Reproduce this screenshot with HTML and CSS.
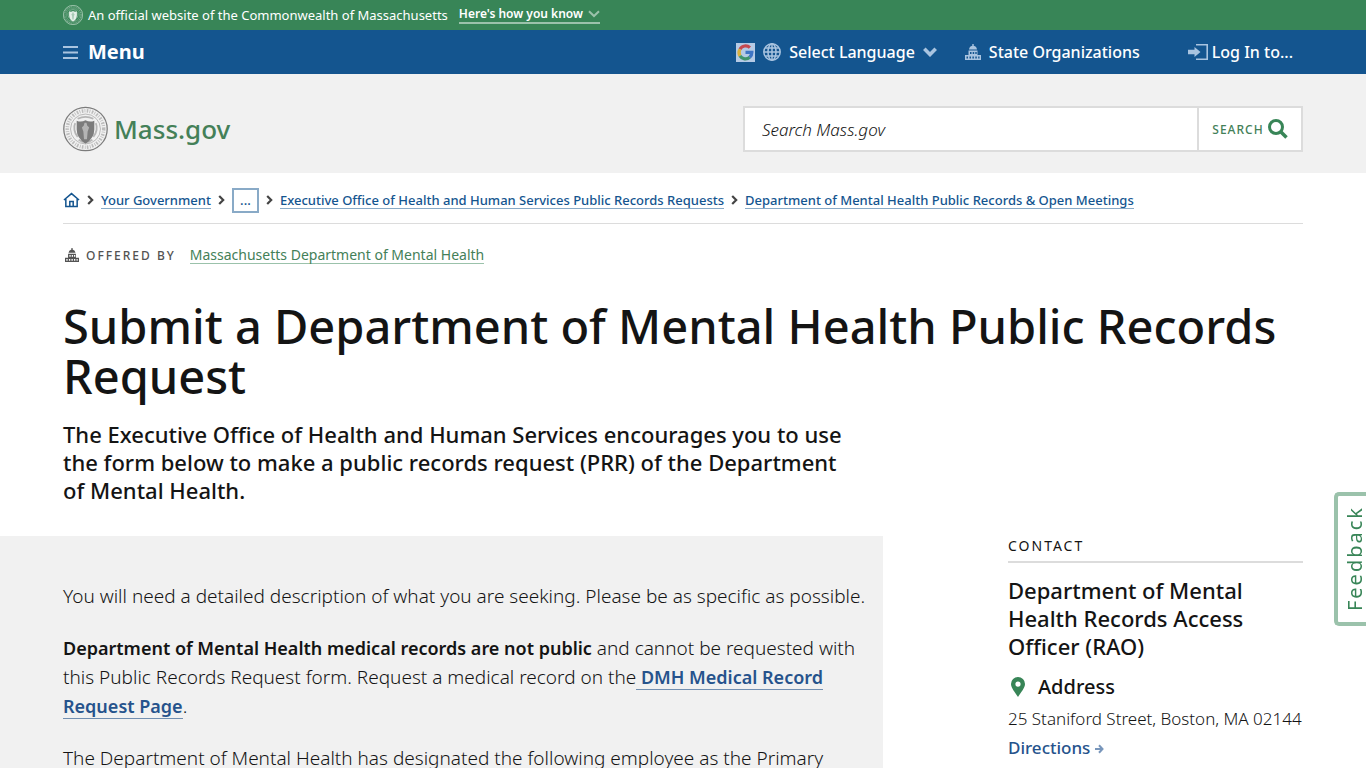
FILE: index.html
```html
<!DOCTYPE html>
<html lang="en">
<head>
<meta charset="utf-8">
<meta name="viewport" content="width=device-width, initial-scale=1">
<title>Submit a Department of Mental Health Public Records Request | Mass.gov</title>
<link rel="stylesheet" href="styles.css">
</head>
<body>
<svg class="sprite" aria-hidden="true">
  <symbol id="seal" viewBox="0 0 46 46">
    <circle cx="23" cy="23" r="22.2" fill="none" stroke="currentColor" stroke-width="1.300"/>
    <circle cx="23" cy="23" r="18.6" fill="none" stroke="currentColor" stroke-width="3.600" stroke-dasharray="1.6 1.3 .8 1.5" opacity=".45"/>
    <circle cx="23" cy="23" r="15.3" fill="none" stroke="currentColor" stroke-width=".7" opacity=".7"/>
    <path d="M12.500 17c-2 4-1 10 2.500 14M33.500 17c2 4 1 10-2.500 14M16 34q7 5 14 0M15 12.500q8-4 16 0" fill="none" stroke="currentColor" stroke-width="1.800" opacity=".5"/>
    <path d="M14 14.500q4.500 2 9-.5 4.500 2.500 9 .5v9q0 9-9 14.500-9-5.500-9-14.500z" fill="currentColor"/>
    <path class="seal-figure" d="M22 16.500h2l.7 3 2 2-1.500 4-.7 8h-3l-.7-8-1.500-4 2-2z"/>
  </symbol>
  <symbol id="capitol" viewBox="0 0 16 16">
    <path fill="currentColor" fill-rule="evenodd" d="M7.300 0h1.400v1.700A4.300 4.300 0 0 1 12 5.500H4a4.300 4.300 0 0 1 3.300-3.800zM3.500 6.500h9V11H16v5H0v-5h3.500zM5 8v2h1.500V8zm2.700 0v2h1.500V8zm2.600 0v2h1.400V8zM1.500 12.500v2H3v-2zm3 0v2H6v-2zm2.900 0v2h1.500v-2zm2.900 0v2h1.500v-2zm2.900 0v2h1.300v-2z"/>
  </symbol>
  <symbol id="chevron" viewBox="0 0 7 10">
    <path d="M1.200 1 5.200 5 1.200 9" fill="none" stroke="currentColor" stroke-width="2.200"/>
  </symbol>
</svg>

<div class="banner wrap">
  <svg class="banner-seal" aria-hidden="true"><use href="#seal"/></svg>
  <span>An official website of the Commonwealth of Massachusetts</span>
  <button class="banner-toggle" type="button">Here's how you know
    <svg width="12" height="8" viewBox="0 0 12 8" aria-hidden="true"><path d="M1 1.200 6 6l5-4.800" fill="none" stroke="currentColor" stroke-width="2"/></svg>
  </button>
</div>

<nav class="topbar wrap" aria-label="Main">
  <button class="menu" type="button">
    <svg width="15" height="13" viewBox="0 0 15 13" aria-hidden="true"><path d="M0 1h15M0 6.500h15M0 12h15" stroke="currentColor" stroke-width="2"/></svg>
    <span>Menu</span>
  </button>
  <div class="utility">
    <button class="utility-item language" type="button">
      <svg width="19" height="19" viewBox="0 0 19 19" aria-hidden="true">
        <path d="M0 0h19v19H0z" fill="#b5cae5"/>
        <g fill="none" stroke-width="3.200">
          <path d="M4 6.200A6.300 6.300 0 0 1 13.900 4.700" stroke="#c5484f"/>
          <path d="M4 6.200a6.400 6.400 0 0 0 0 6.600" stroke="#d9b13d"/>
          <path d="M4 12.800a6.400 6.400 0 0 0 9.700 1.500" stroke="#3f956c"/>
          <path d="M9.500 9.300h6.400a6.500 6.500 0 0 1-2.200 5" stroke="#3f75c4"/>
        </g>
      </svg>
      <svg width="18" height="18" viewBox="0 0 18 18" aria-hidden="true"><g fill="none" stroke="currentColor" stroke-width="1.500"><circle cx="9" cy="9" r="8.200"/><ellipse cx="9" cy="9" rx="4" ry="8.200"/><path d="M9 1v16M1 9h16M2.200 5h13.600M2.200 13h13.600"/></g></svg>
      <span>Select Language</span>
      <svg width="14" height="10" viewBox="0 0 14 10" aria-hidden="true"><path d="M1.300 1.800 7 7.500l5.700-5.700" fill="none" stroke="currentColor" stroke-width="3.600"/></svg>
    </button>
    <a class="utility-item organizations" href="#organizations">
      <svg width="16" height="16" aria-hidden="true"><use href="#capitol"/></svg>
      <span>State Organizations</span>
    </a>
    <button class="utility-item login" type="button">
      <svg width="20" height="16" viewBox="0 0 20 16" aria-hidden="true"><path d="M8 .8h11.200v14.400H8" fill="none" stroke="currentColor" stroke-width="1.600"/><path d="M0 5.800h6.500V3l6 5-6 5v-2.800H0z" fill="currentColor"/></svg>
      <span>Log In to...</span>
    </button>
  </div>
</nav>

<header class="masthead wrap">
  <a class="logo" href="#home"><svg class="logo-seal" aria-hidden="true"><use href="#seal"/></svg><span>Mass.gov</span></a>
  <form class="search" role="search">
    <input type="search" aria-label="Search Mass.gov" placeholder="Search Mass.gov">
    <button type="submit">Search
      <svg width="20" height="20" viewBox="0 0 20 20" aria-hidden="true"><circle cx="8" cy="8" r="6.500" fill="none" stroke="currentColor" stroke-width="3"/><path d="m12.500 12.500 6 6" stroke="currentColor" stroke-width="3.600"/></svg>
    </button>
  </form>
</header>

<main>
  <div class="wrap">
    <nav class="crumbs" aria-label="Breadcrumbs">
      <a class="home" href="#home" aria-label="Home"><svg width="17" height="16" viewBox="0 0 18 16" aria-hidden="true"><path d="M1 8 9 1.200 17 8M3 7v7.800h12V7M7.200 14.500V9.700h3.600v4.800" fill="none" stroke="currentColor" stroke-width="1.600"/></svg></a>
      <svg class="sep" aria-hidden="true"><use href="#chevron"/></svg>
      <a href="#government">Your Government</a>
      <svg class="sep" aria-hidden="true"><use href="#chevron"/></svg>
      <button type="button" aria-label="Show more breadcrumbs">...</button>
      <svg class="sep" aria-hidden="true"><use href="#chevron"/></svg>
      <a href="#eohhs">Executive Office of Health and Human Services Public Records Requests</a>
      <svg class="sep" aria-hidden="true"><use href="#chevron"/></svg>
      <a href="#dmh-records">Department of Mental Health Public Records &amp; Open Meetings</a>
    </nav>
    <div class="offered">
      <svg width="14" height="14" aria-hidden="true"><use href="#capitol"/></svg>
      <span class="offered-label">Offered by</span>
      <a href="#dmh">Massachusetts Department of Mental Health</a>
    </div>
    <h1>Submit a Department of Mental Health Public Records Request</h1>
    <p class="lead">The Executive Office of Health and Human Services encourages you to use the form below to make a public records request (PRR) of the Department of Mental Health.</p>
  </div>

  <div class="columns">
    <section class="content">
      <p>You will need a detailed description of what you are seeking. Please be as specific as possible.</p>
      <p><strong>Department of Mental Health medical records are not public</strong> and cannot be requested with this Public Records Request form. Request a medical record on the<a href="#medical-records"> DMH Medical Record Request Page</a>.</p>
      <p>The Department of Mental Health has designated the following employee as the Primary</p>
    </section>
    <aside class="contact">
      <h2>Contact</h2>
      <h3>Department of Mental Health Records Access Officer (RAO)</h3>
      <h4><svg width="14" height="20" viewBox="0 0 14 20" aria-hidden="true"><path fill="#388557" fill-rule="evenodd" d="M7 0a7 7 0 0 1 7 7c0 4-4 8-7 13C4 15 0 11 0 7a7 7 0 0 1 7-7zm0 4.500a2.600 2.600 0 1 0 0 5.200 2.600 2.600 0 0 0 0-5.200z"/></svg>Address</h4>
      <p>25 Staniford Street, Boston, MA 02144</p>
      <a class="directions" href="#directions">Directions <svg width="9" height="10" viewBox="0 0 9 10" aria-hidden="true"><path d="M0 5h7M4 1.300 7.500 5 4 8.700" fill="none" stroke="currentColor" stroke-width="2"/></svg></a>
    </aside>
  </div>
</main>
<button class="feedback" type="button">Feedback</button>
</body>
</html>
```
FILE: styles.css
```css
:root {
  --gutter: max(40px, calc((100vw - 1240px) / 2));
  --green: #388557;
  --blue: #14558f;
  --ink: #141414;
}

* { box-sizing: border-box; }

body {
  margin: 0;
  font-family: "Noto Sans", sans-serif;
  font-size: 16px;
  color: var(--ink);
  background: #fff;
}

button, input { font: inherit; color: inherit; }
button { padding: 0; border: 0; background: none; cursor: pointer; }
a { text-decoration: none; color: inherit; }
h1, h2, h3, h4, p { margin: 0; }
svg { flex: none; }
.sprite { display: none; }
.wrap { padding-inline: var(--gutter); }

.banner {
  display: flex;
  align-items: center;
  height: 30px;
  padding-bottom: 1px;
  color: #fff;
  background: var(--green);
  font-size: 13px;
}
.banner-seal { width: 20px; height: 20px; margin-right: 5px; color: #e4efe8; fill: #a9cbb7; }
.banner-toggle {
  display: flex;
  align-items: center;
  gap: 5px;
  margin-left: 11px;
  border-bottom: 2px solid #9bc2ab;
  font-size: 12px;
  line-height: 16px;
  font-weight: 600;
}
.banner-toggle svg { color: #9bc2ab; }

.topbar {
  display: flex;
  align-items: center;
  justify-content: space-between;
  height: 44px;
  color: #fff;
  background: var(--blue);
}
.topbar svg { color: #a9c4e0; }
.menu { display: flex; align-items: center; gap: 10px; font-size: 20px; line-height: 24px; font-weight: 700; }
.utility { display: flex; align-items: center; padding-right: 10px; font-weight: 500; }
.utility-item { display: flex; align-items: center; gap: 8px; }
.language { margin-right: 28px; }
.organizations { margin-right: 48px; }
.login { gap: 4px; }

.masthead {
  display: flex;
  align-items: center;
  justify-content: space-between;
  min-height: 99px;
  padding-top: 11px;
  background: #f1f1f1;
}
.logo { display: flex; align-items: center; gap: 6px; font-size: 26px; line-height: 36px; font-weight: 500; color: #448058; }
.logo-seal { width: 45px; height: 46px; color: #7c7c7c; fill: #b5b5b5; }
.search {
  display: flex;
  width: 560px;
  height: 46px;
  border: 2px solid #dcdcdc;
  background: #fff;
}
.search input { flex: 1; min-width: 0; padding: 0 17px; border: 0; font-size: 17px; font-style: italic; font-weight: 300; background: none; }
.search input::placeholder { color: var(--ink); opacity: 1; }
.search button {
  display: flex;
  align-items: center;
  justify-content: center;
  gap: 4px;
  width: 104px;
  border-left: 2px solid #dcdcdc;
  color: #448058;
  font-size: 12px;
  font-weight: 500;
  letter-spacing: 1px;
  text-transform: uppercase;
}
.search button svg { color: var(--green); }

.crumbs {
  display: flex;
  align-items: center;
  min-height: 51px;
  padding-top: 4px;
  border-bottom: 1px solid #dcdcdc;
  color: var(--blue);
  font-size: 13px;
  font-weight: 500;
}
.crumbs a { border-bottom: 1px solid #89aac7; line-height: 16px; }
.crumbs .home { display: flex; border: 0; }
.crumbs button { width: 27px; height: 25px; border: 2px solid #89aac7; }
.sep { width: 7px; height: 10px; margin: 0 7px; color: #444; }

.offered { display: flex; align-items: center; height: 20px; margin-top: 21px; font-size: 14px; color: #535353; }
.offered svg { margin: 0 7px 0 2px; }
.offered-label { margin-right: 14px; font-size: 12px; font-weight: 500; letter-spacing: 2px; text-transform: uppercase; }
.offered a { border-bottom: 1px solid #9bc2ab; line-height: 17px; color: #448058; }

h1 { margin-top: 36px; font-size: 47px; line-height: 50px; font-weight: 500; }
.lead { max-width: 800px; margin-top: 19px; font-size: 22px; line-height: 28px; font-weight: 500; }

.columns {
  display: flex;
  justify-content: space-between;
  gap: 40px;
  margin-top: 32px;
  padding-right: var(--gutter);
}
.content {
  flex: 0 1 883px;
  padding: 46px 16px 0 var(--gutter);
  background: #f1f1f1;
  font-size: 19px;
  line-height: 29px;
  font-weight: 300;
}
.content p + p { margin-top: 23px; }
.content strong, .content a { font-size: 18px; font-weight: 600; }
.content a { border-bottom: 1px solid #728fb1; color: #26538c; }

.contact { flex: 0 0 295px; }
.contact h2 {
  padding-bottom: 6px;
  border-bottom: 2px solid #dcdcdc;
  font-size: 14px;
  line-height: 19px;
  font-weight: 400;
  letter-spacing: 2px;
  text-transform: uppercase;
}
.contact h3 { margin-top: 13px; font-size: 22px; line-height: 28px; font-weight: 500; }
.contact h4 { display: flex; align-items: center; gap: 13px; margin: 13px 0 0 3px; font-size: 20px; line-height: 28px; font-weight: 500; }
.contact p { margin-top: 6px; font-size: 17px; line-height: 24px; font-weight: 300; white-space: nowrap; }
.directions { display: inline-block; margin-top: 5px; color: #26538c; font-size: 17px; line-height: 24px; font-weight: 500; }
.directions svg { color: #7896bb; }

.feedback {
  position: fixed;
  right: 0;
  top: 492px;
  padding: 10px 1px 11px 7px;
  border: 4px solid #9bc2ab;
  border-right: 0;
  border-radius: 5px 0 0 5px;
  background: #fff;
  color: var(--green);
  font-size: 20px;
  line-height: 20px;
  letter-spacing: 2px;
  writing-mode: sideways-lr;
}
```
